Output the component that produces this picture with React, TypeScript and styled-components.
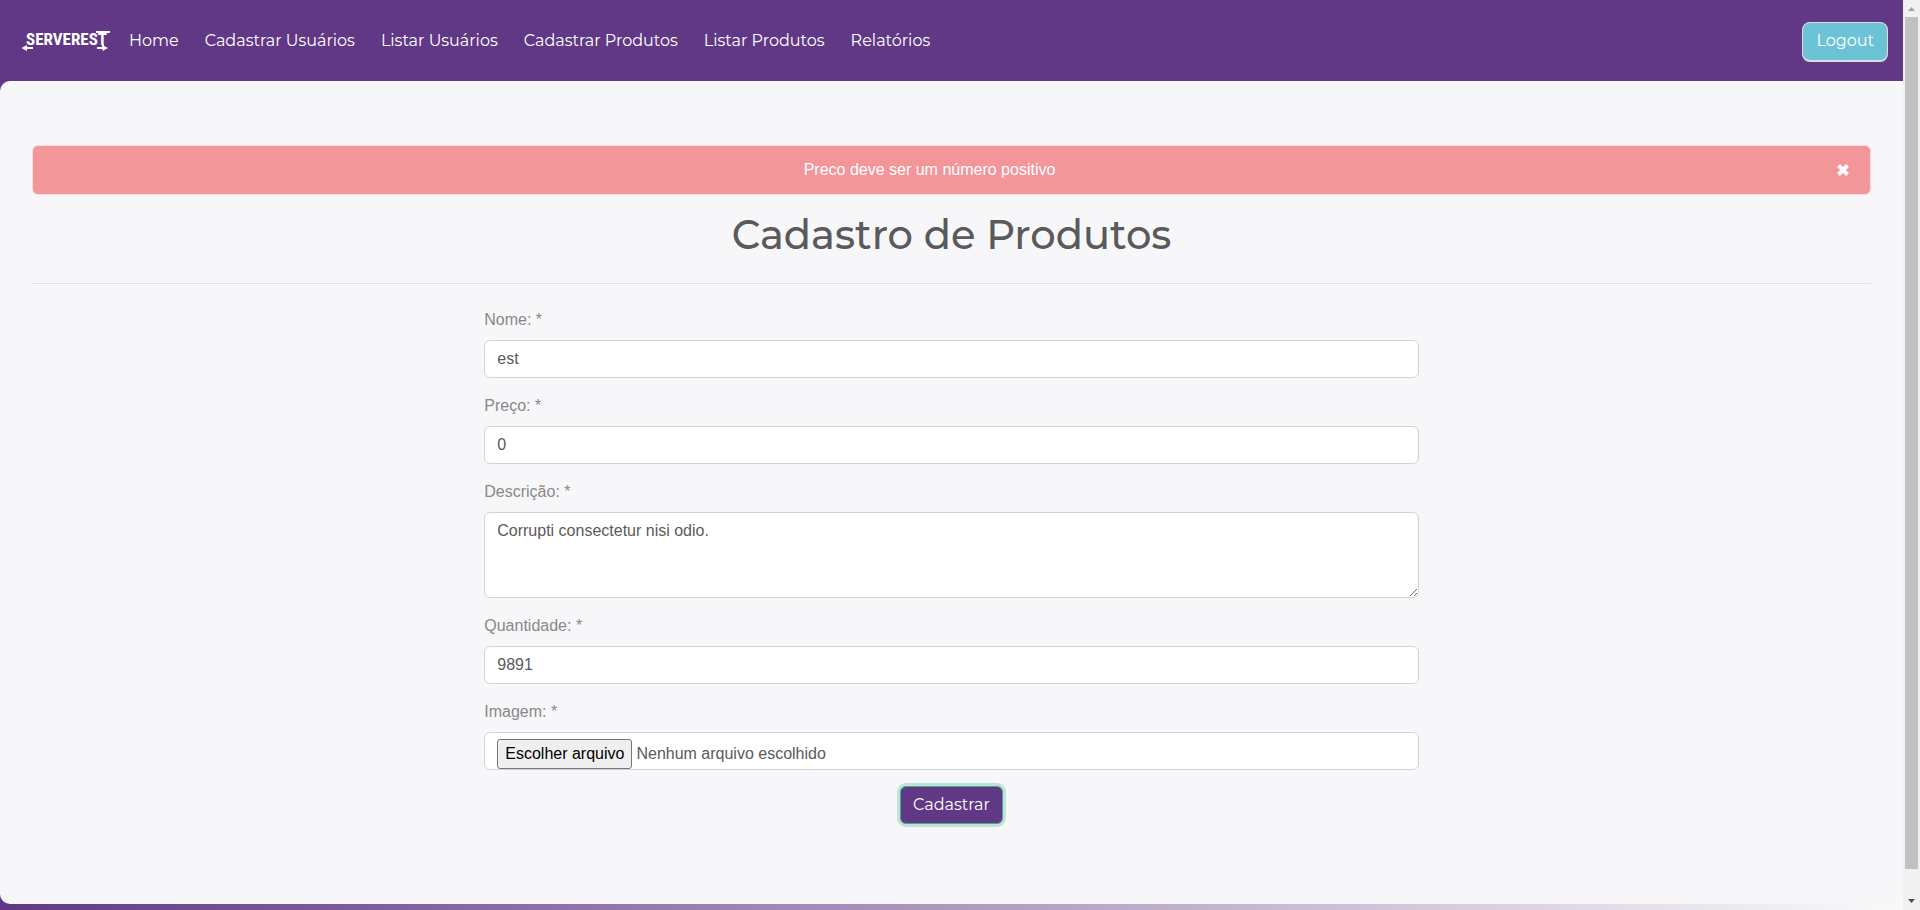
import React from 'react';
import styled, { createGlobalStyle, css } from 'styled-components';

const display = "Montserrat, Inter, 'Open Sans', sans-serif";
const body = "Arial, 'Liberation Sans', sans-serif";

const color = {
  purple: '#613885',
  surface: '#f7f7f9',
  text: '#5a5a5a',
  muted: '#888888',
  border: '#ced4da',
  danger: '#f3969a',
  info: '#6cc3d5',
};

const GlobalStyle = createGlobalStyle`
  *, *::before, *::after { box-sizing: border-box; }
  body {
    margin: 0;
    font-family: ${body};
    font-size: 16px;
    line-height: 24px;
    color: ${color.muted};
  }
`;

const Viewport = styled.div`
  display: flex;
  min-height: 100vh;
`;

const Page = styled.div`
  flex: 1;
  min-width: 0;
  background: linear-gradient(to right, ${color.purple}, #fafafa);
`;

const Navbar = styled.nav`
  display: flex;
  align-items: center;
  height: 81px;
  padding: 2px 15px 0 16px;
  background: ${color.purple};
`;

const Brand = styled.a`
  display: flex;
  margin-right: 15px;
`;

const NavList = styled.ul`
  display: flex;
  flex: 1;
  gap: 26px;
  margin: 0;
  padding: 0 0 2px;
  list-style: none;
`;

const NavLink = styled.a`
  font-family: ${display};
  font-size: 16px;
  color: #fff;
  text-decoration: none;
`;

const buttonBase = css`
  font-family: ${display};
  font-size: 16px;
  line-height: 24px;
  color: #fff;
  cursor: pointer;
`;

const LogoutButton = styled.button`
  ${buttonBase}
  height: 40px;
  padding: 0 13px;
  background: ${color.info};
  border: 1px solid #dedede;
  border-bottom-width: 2px;
  border-radius: 8px;
`;

const SubmitButton = styled.button`
  ${buttonBase}
  height: 38px;
  padding: 0 12px;
  background: ${color.purple};
  border: 1px solid #43ac8c;
  border-radius: 6px;
  box-shadow: 0 0 0 3px #bfe3d8;
`;

const Panel = styled.main`
  padding: 64px 32px 80px;
  background: ${color.surface};
  border-radius: 10px;
`;

const Alert = styled.div`
  display: flex;
  align-items: center;
  margin-bottom: 16px;
  padding: 12px 20px;
  background: ${color.danger};
  border: 1px solid #fadddf;
  border-radius: 6px;
  color: #fff;
`;

const AlertText = styled.span`
  flex: 1;
  text-align: center;
`;

const CloseButton = styled.button`
  display: flex;
  align-items: center;
  justify-content: flex-end;
  width: 44px;
  height: 24px;
  padding: 0;
  background: none;
  border: 0;
  color: #fff;
  cursor: pointer;
`;

const Title = styled.h1`
  margin: 0;
  font-family: ${display};
  font-size: 40px;
  font-weight: 500;
  line-height: 48px;
  text-align: center;
  color: ${color.text};
`;

const Divider = styled.hr`
  margin: 24px 0;
  border: 0;
  border-top: 1px solid #dedfe1;
`;

const Form = styled.form`
  display: flex;
  flex-direction: column;
  gap: 16px;
  width: calc(50% + 15px);
  margin: 0 auto;
`;

const Field = styled.div`
  display: flex;
  flex-direction: column;
  gap: 8px;
`;

const Label = styled.label`
  line-height: 24px;
`;

const control = css`
  width: 100%;
  height: 38px;
  padding: 6px 12px;
  font-family: ${body};
  font-size: 16px;
  line-height: 24px;
  color: ${color.text};
  background: #fff;
  border: 1px solid ${color.border};
  border-radius: 6px;
  outline: none;
`;

const Input = styled.input`
  ${control}
`;

const TextArea = styled.textarea`
  ${control}
  display: block;
  height: 86px;
  resize: vertical;
`;

const FileBox = styled.div`
  ${control}
  position: relative;
  display: flex;
  align-items: flex-start;
  gap: 4px;
  padding-bottom: 0;
  overflow: hidden;
`;

const HiddenFile = styled.input`
  position: absolute;
  inset: 0;
  opacity: 0;
  cursor: pointer;
`;

const FileButton = styled.span`
  height: 30px;
  padding: 2px 7px;
  background: #efefef;
  border: 1px solid #767676;
  border-radius: 3px;
  color: #000;
`;

const FileStatus = styled.span`
  padding: 3px 0;
`;

const Actions = styled.div`
  display: flex;
  justify-content: center;
`;

const ScrollTrack = styled.div`
  display: flex;
  flex-direction: column;
  width: 17px;
  padding: 0 2px;
  background: #f1f1f1;
`;

const ScrollArrow = styled.svg`
  flex: none;
  width: 13px;
  height: 17px;
`;

const ScrollThumb = styled.div`
  flex: 852;
  background: #c1c1c1;
`;

const ScrollRest = styled.div`
  flex: 24;
`;

const Logo = () => (
  <svg width="98" height="32" viewBox="0 0 98 32" role="img" aria-label="Serverest">
    <text
      x="10"
      y="19"
      fill="#fff"
      fontFamily="'Roboto Condensed', Roboto, sans-serif"
      fontSize="17"
      fontWeight="700"
    >
      SERVEREST
    </text>
    <g stroke="#fff" strokeWidth="2" fill="none">
      <path d="M80 6H94" />
      <path d="M8 22H17" />
      <path d="M87 18V22" />
      <path d="M81 22H89" />
    </g>
    <path d="M5.500 22L11 19V25Z" fill="#fff" />
    <path d="M92 22L86.500 19V25Z" fill="#fff" />
  </svg>
);

const links = [
  'Home',
  'Cadastrar Usuários',
  'Listar Usuários',
  'Cadastrar Produtos',
  'Listar Produtos',
  'Relatórios',
];

export default function App() {
  return (
    <Viewport>
      <GlobalStyle />
      <Page>
        <Navbar>
          <Brand href="#">
            <Logo />
          </Brand>
          <NavList>
            {links.map((link) => (
              <li key={link}>
                <NavLink href="#">{link}</NavLink>
              </li>
            ))}
          </NavList>
          <LogoutButton type="button">Logout</LogoutButton>
        </Navbar>
        <Panel>
          <Alert role="alert">
            <AlertText>Preco deve ser um número positivo</AlertText>
            <CloseButton type="button" aria-label="Fechar">
              <svg width="14" height="14" viewBox="0 0 14 14">
                <path d="M2.500 2.500L11.500 11.500M11.500 2.500L2.500 11.500" stroke="currentColor" strokeWidth="4" />
              </svg>
            </CloseButton>
          </Alert>
          <Title>Cadastro de Produtos</Title>
          <Divider />
          <Form onSubmit={(e) => e.preventDefault()}>
            <Field>
              <Label htmlFor="nome">Nome: *</Label>
              <Input id="nome" type="text" defaultValue="est" />
            </Field>
            <Field>
              <Label htmlFor="preco">Preço: *</Label>
              <Input id="preco" type="number" defaultValue="0" />
            </Field>
            <Field>
              <Label htmlFor="descricao">Descrição: *</Label>
              <TextArea id="descricao" defaultValue="Corrupti consectetur nisi odio." />
            </Field>
            <Field>
              <Label htmlFor="quantidade">Quantidade: *</Label>
              <Input id="quantidade" type="number" defaultValue="9891" />
            </Field>
            <Field>
              <Label htmlFor="imagem">Imagem: *</Label>
              <FileBox>
                <FileButton>Escolher arquivo</FileButton>
                <FileStatus>Nenhum arquivo escolhido</FileStatus>
                <HiddenFile id="imagem" type="file" />
              </FileBox>
            </Field>
            <Actions>
              <SubmitButton type="submit">Cadastrar</SubmitButton>
            </Actions>
          </Form>
        </Panel>
      </Page>
      <ScrollTrack aria-hidden="true">
        <ScrollArrow viewBox="0 0 13 17">
          <path d="M3 11L6.500 7L10 11Z" fill="#a3a3a3" />
        </ScrollArrow>
        <ScrollThumb />
        <ScrollRest />
        <ScrollArrow viewBox="0 0 13 17">
          <path d="M3 6L6.500 10L10 6Z" fill="#505050" />
        </ScrollArrow>
      </ScrollTrack>
    </Viewport>
  );
}
